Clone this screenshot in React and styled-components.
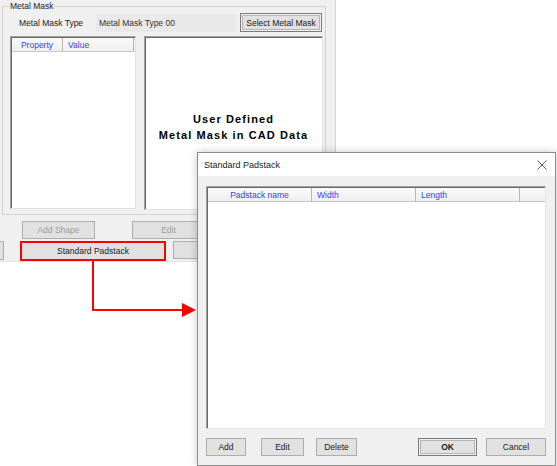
import React from 'react'
import styled, { createGlobalStyle } from 'styled-components'

const GlobalStyle = createGlobalStyle`
  * { box-sizing: border-box; }
  body {
    margin: 0;
    background: #ffffff;
    font-family: "Liberation Sans", Arial, sans-serif;
    font-size: 8.5px;
    color: #1a1a1a;
  }
`

function ListView({ columns, width, height }) {
    return (
        <ListFrame style={{ width, height }}>
            <ListHeader>
                {columns.map(col => (
                    <HeaderCell key={col.label} $width={col.width} $align={col.align}>
                        {col.label}
                    </HeaderCell>
                ))}
                <HeaderFiller />
            </ListHeader>
        </ListFrame>
    )
}

function CloseIcon() {
    return (
        <svg width="10" height="10" viewBox="0 0 10 10">
            <path d="M0.5 0.5 L9.5 9.5 M9.5 0.5 L0.5 9.5" stroke="#444" strokeWidth="0.9" fill="none" />
        </svg>
    )
}

function App() {
    return (
        <>
            <GlobalStyle />
            <Scene>

                <Window>
                    <GroupBox>
                        <Legend>Metal Mask</Legend>
                        <TypeRow>
                            <FieldLabel>Metal Mask Type</FieldLabel>
                            <ReadOnlyField>Metal Mask Type 00</ReadOnlyField>
                            <Button $default $width={82} $height={19}>Select Metal Mask</Button>
                        </TypeRow>
                        <MaskBody>
                            <ListView
                                width={126}
                                height={173}
                                columns={[
                                    { label: 'Property', width: 51, align: 'center' },
                                    { label: 'Value', width: 71 },
                                ]}
                            />
                            <CadPreview>
                                <CadText>User Defined<br />Metal Mask in CAD Data</CadText>
                            </CadPreview>
                        </MaskBody>
                    </GroupBox>

                    <ButtonRow $gap={37} $indent={22}>
                        <Button $disabled $width={73}>Add Shape</Button>
                        <Button $disabled $width={73}>Edit</Button>
                    </ButtonRow>
                    <ButtonRow $gap={7} $indent={0}>
                        <StubButton />
                        <Button $highlight $gap={9} $width={146} $height={20}>Standard Padstack</Button>
                        <Button $width={80}></Button>
                    </ButtonRow>
                </Window>

                <Arrow width="120" height="70" viewBox="0 0 120 70">
                    <polyline points="3,1 3,52 93,52" fill="none" stroke="#ff0000" strokeWidth="2" />
                    <polygon points="92,45 106,52 92,59" fill="#ff0000" />
                </Arrow>

                <Dialog>
                    <TitleBar>
                        <Title>Standard Padstack</Title>
                        <CloseButton><CloseIcon /></CloseButton>
                    </TitleBar>
                    <DialogBody>
                        <ListView
                            width="100%"
                            height={243}
                            columns={[
                                { label: 'Padstack name', width: 104, align: 'center' },
                                { label: 'Width', width: 104 },
                                { label: 'Length', width: 104 },
                            ]}
                        />
                        <DialogButtons>
                            <Button $width={40}>Add</Button>
                            <Button $width={43} $gap={15}>Edit</Button>
                            <Button $width={41} $gap={12}>Delete</Button>
                            <Spacer />
                            <Button $default $bold $width={59}>OK</Button>
                            <Button $width={60} $gap={9}>Cancel</Button>
                        </DialogButtons>
                    </DialogBody>
                </Dialog>

            </Scene>
        </>
    )
}

export default App



const Scene = styled.div`
position: relative;
width: 557px;
height: 466px;
overflow: hidden;
`

const Window = styled.div`
width: 336px;
height: 262px;
background: #f0f0f0;
border-right: 1px solid #d4d4d4;
border-bottom: 1px solid #e2e2e2;
overflow: hidden;
`

const GroupBox = styled.fieldset`
margin: 0 0 0 2px;
width: 324px;
height: 215px;
padding: 0 1px 3px 7px;
border: 1px solid #d3d3d3;
min-width: 0;
`

const Legend = styled.legend`
margin-left: -1px;
padding: 0 1px;
line-height: 12px;
color: #222;
`

const TypeRow = styled.div`
display: flex;
align-items: center;
height: 19px;
margin-top: 1px;
`

const FieldLabel = styled.span`
width: 86px;
padding-left: 9px;
color: #222;
`

const ReadOnlyField = styled.div`
width: 140px;
height: 18px;
margin-right: 4px;
padding-left: 3px;
display: flex;
align-items: center;
background: #e9e9e9;
color: #333;
`

const MaskBody = styled.div`
display: flex;
gap: 8px;
margin-top: 4px;
align-items: flex-start;
`

const ListFrame = styled.div`
flex-shrink: 0;
background: #ffffff;
border: 1px solid #a0a0a0;
border-right-color: #e3e3e3;
border-bottom-color: #e3e3e3;
box-shadow: inset 1px 1px 0 #696969;
padding: 1px 0 0 1px;
`

const ListHeader = styled.div`
display: flex;
height: 14px;
background: linear-gradient(#fbfbfb, #eeeeee);
border-bottom: 1px solid #c9c9c9;
`

const HeaderCell = styled.div`
width: ${p => p.$width}px;
flex-shrink: 0;
display: flex;
align-items: center;
justify-content: ${p => p.$align === 'center' ? 'center' : 'flex-start'};
padding-left: ${p => p.$align === 'center' ? 0 : 5}px;
border-right: 1px solid #b5b5b5;
color: #3a3aff;
white-space: nowrap;
`

const HeaderFiller = styled.div`
flex: 1;
`

const CadPreview = styled.div`
width: 179px;
height: 174px;
background: #ffffff;
border: 1px solid #a0a0a0;
border-right-color: #e3e3e3;
border-bottom-color: #e3e3e3;
box-shadow: inset 1px 1px 0 #696969;
display: flex;
align-items: center;
justify-content: center;
padding-top: 8px;
`

const CadText = styled.div`
font-family: "Liberation Sans", Arial, sans-serif;
font-weight: 700;
font-size: 11px;
letter-spacing: 1.1px;
line-height: 16px;
text-align: center;
color: #000;
`

const ButtonRow = styled.div`
display: flex;
align-items: flex-start;
gap: ${p => p.$gap}px;
padding-left: ${p => p.$indent}px;
margin-top: ${p => p.$indent ? 6 : 2}px;
`

const Button = styled.button`
flex-shrink: 0;
width: ${p => p.$width}px;
height: ${p => p.$height || 18}px;
margin-left: ${p => p.$gap || 0}px;
padding: 0;
font-family: "Liberation Sans", Arial, sans-serif;
font-size: 8.5px;
font-weight: ${p => p.$bold ? 700 : 400};
color: ${p => p.$disabled ? '#9c9c9c' : '#1a1a1a'};
background: #e1e1e1;
border: ${p => p.$highlight ? '2px solid #ff0000' : p.$default ? '1px solid #7a7a7a' : '1px solid #adadad'};
box-shadow: ${p => p.$default ? 'inset 0 0 0 1px #f0f0f0, inset 0 0 0 2px #b5b5b5' : 'none'};
border-radius: 0;
white-space: nowrap;
`

const StubButton = styled.div`
width: 4px;
height: 19px;
background: #e1e1e1;
border: 1px solid #adadad;
border-left: none;
`

const Arrow = styled.svg`
position: absolute;
left: 90px;
top: 258px;
`

const Dialog = styled.div`
position: absolute;
left: 197px;
top: 152px;
width: 359px;
height: 314px;
display: flex;
flex-direction: column;
background: #f0f0f0;
border: 1px solid #8c8c8c;
box-shadow: 0 0 8px rgba(0, 0, 0, 0.22);
`

const TitleBar = styled.div`
height: 23px;
flex-shrink: 0;
display: flex;
align-items: center;
justify-content: space-between;
padding: 0 8px 0 6px;
background: #ffffff;
`

const Title = styled.span`
font-size: 9px;
color: #1a1a1a;
`

const CloseButton = styled.div`
display: flex;
align-items: center;
`

const DialogBody = styled.div`
flex: 1;
display: flex;
flex-direction: column;
padding: 10px 9px 9px 8px;
`

const DialogButtons = styled.div`
display: flex;
margin-top: 9px;
`

const Spacer = styled.div`
flex: 1;
`
